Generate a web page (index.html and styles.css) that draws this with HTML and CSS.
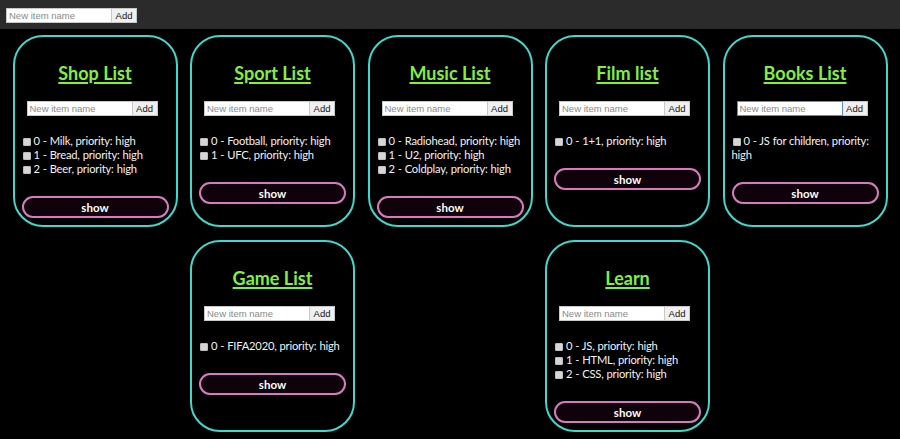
FILE: index.html
```html
<!DOCTYPE html>
<html>
<head>
<meta charset="utf-8">
<link rel="stylesheet" href="styles.css">
</head>
<body>
<header class="topbar">
  <input class="field" type="text" placeholder="New item name"><button class="add">Add</button>
</header>
<main class="board">
  <section class="card">
    <h2 class="title">Shop List</h2>
    <div class="form"><input class="field" type="text" placeholder="New item name"><button class="add">Add</button></div>
    <ul class="items">
      <li><input type="checkbox" class="check">0 - Milk, priority: high</li>
      <li><input type="checkbox" class="check">1 - Bread, priority: high</li>
      <li><input type="checkbox" class="check">2 - Beer, priority: high</li>
    </ul>
    <button class="show">show</button>
  </section>
  <section class="card">
    <h2 class="title">Sport List</h2>
    <div class="form"><input class="field" type="text" placeholder="New item name"><button class="add">Add</button></div>
    <ul class="items">
      <li><input type="checkbox" class="check">0 - Football, priority: high</li>
      <li><input type="checkbox" class="check">1 - UFC, priority: high</li>
    </ul>
    <button class="show">show</button>
  </section>
  <section class="card">
    <h2 class="title">Music List</h2>
    <div class="form"><input class="field" type="text" placeholder="New item name"><button class="add">Add</button></div>
    <ul class="items">
      <li><input type="checkbox" class="check">0 - Radiohead, priority: high</li>
      <li><input type="checkbox" class="check">1 - U2, priority: high</li>
      <li><input type="checkbox" class="check">2 - Coldplay, priority: high</li>
    </ul>
    <button class="show">show</button>
  </section>
  <section class="card">
    <h2 class="title">Film list</h2>
    <div class="form"><input class="field" type="text" placeholder="New item name"><button class="add">Add</button></div>
    <ul class="items">
      <li><input type="checkbox" class="check">0 - 1+1, priority: high</li>
    </ul>
    <button class="show">show</button>
  </section>
  <section class="card">
    <h2 class="title">Books List</h2>
    <div class="form"><input class="field focus" type="text" placeholder="New item name"><button class="add">Add</button></div>
    <ul class="items">
      <li><input type="checkbox" class="check">0 - JS for children, priority: high</li>
    </ul>
    <button class="show">show</button>
  </section>
  <section class="card">
    <h2 class="title">Game List</h2>
    <div class="form"><input class="field" type="text" placeholder="New item name"><button class="add">Add</button></div>
    <ul class="items">
      <li><input type="checkbox" class="check">0 - FIFA2020, priority: high</li>
    </ul>
    <button class="show">show</button>
  </section>
  <section class="card">
    <h2 class="title">Learn</h2>
    <div class="form"><input class="field" type="text" placeholder="New item name"><button class="add">Add</button></div>
    <ul class="items">
      <li><input type="checkbox" class="check">0 - JS, priority: high</li>
      <li><input type="checkbox" class="check">1 - HTML, priority: high</li>
      <li><input type="checkbox" class="check">2 - CSS, priority: high</li>
    </ul>
    <button class="show">show</button>
  </section>
</main>
</body>
</html>
```
FILE: styles.css
```css
* { box-sizing: border-box; }
html, body { margin: 0; padding: 0; background: #000; }
body { font-family: Lato, "Noto Sans", sans-serif; color: #f2f2f2; }

.topbar {
  height: 29px;
  background: #2b2b2b;
  padding: 8px 0 0 6px;
  display: flex;
  align-items: flex-start;
}

.field {
  width: 106px;
  height: 15px;
  margin: 0;
  padding: 0 2px;
  border: 1px solid #c8c8c8;
  background: #fff;
  font-family: "Liberation Sans", Arial, sans-serif;
  font-size: 9.5px;
  color: #000;
  outline: none;
}
.field::placeholder { color: #8a8a8a; }
.field.focus { border-color: #5a8ad8; }

.add {
  width: 25px;
  height: 15px;
  margin: 0;
  padding: 0;
  border: 1px solid #c8c8c8;
  border-left: none;
  background: #f0f0f0;
  font-family: "Liberation Sans", Arial, sans-serif;
  font-size: 9.5px;
  color: #111;
}

.board {
  display: flex;
  flex-wrap: wrap;
  justify-content: space-evenly;
  row-gap: 13px;
  padding-top: 6px;
}

.card {
  width: 165px;
  height: 192px;
  border: 2px solid #3fd8cc;
  border-radius: 30px;
  padding: 0 7px;
  display: flex;
  flex-direction: column;
}

.title {
  margin: 25px 0 0;
  text-align: center;
  font-size: 18px;
  line-height: 22px;
  font-weight: 700;
  color: #80f040;
  text-decoration: underline;
  text-decoration-thickness: 1.5px;
  text-underline-offset: 2px;
}

.form {
  display: flex;
  margin: 17px 0 0 5px;
}

.items {
  list-style: none;
  margin: 18px 0 0;
  padding: 0;
  font-size: 11.2px;
  letter-spacing: -0.2px;
  word-spacing: 0.3px;
  line-height: 14px;
}
.items li { padding-right: 2px; }

.check {
  width: 8px;
  height: 8px;
  margin: 0 3px 0 1px;
  vertical-align: -0.5px;
  appearance: none;
  background: #d6d6d6;
  border: 1px solid #bdbdbd;
  border-radius: 1px;
}

.show {
  margin: 20px 0 0;
  width: 147px;
  height: 22px;
  border: 2px solid #d67bbd;
  border-radius: 11px;
  background: #10020a;
  color: #fff;
  font-family: Lato, "Noto Sans", sans-serif;
  font-weight: 700;
  font-size: 11.5px;
  padding: 0;
}
```
